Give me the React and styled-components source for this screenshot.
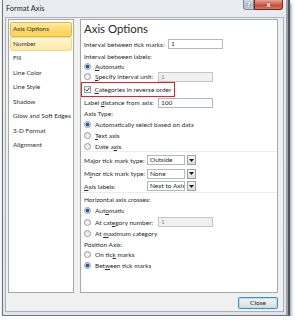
import React from "react";
import styled, { createGlobalStyle } from "styled-components";

const GlobalStyle = createGlobalStyle`
  *, *::before, *::after {
    box-sizing: border-box;
  }
  html, body {
    margin: 0;
    padding: 0;
    background: #ffffff;
  }
  body {
    font-family: Lato, "Liberation Sans", sans-serif;
    color: #2a2a2a;
  }
`;

const Window = styled.div`
  width: 288px;
  height: 316px;
  margin-left: 2px;
  border: 1px solid #6f757d;
  border-right: 2px solid #4f555c;
  border-top: none;
  background: linear-gradient(180deg, #e9edf2 0%, #dfe4ea 100%);
  box-shadow: 1px 3px 3px rgba(0, 0, 0, 0.45), inset -2px 0 0 #9aa2ab;
  display: flex;
  flex-direction: column;
`;

const TitleBar = styled.div`
  height: 17px;
  display: flex;
  align-items: flex-start;
  justify-content: space-between;
  padding: 0 5px 0 3px;
`;

const TitleText = styled.div`
  font-size: 7.4px;
  line-height: 17px;
  color: #1f1f1f;
`;

const Caption = styled.div`
  display: flex;
`;

const CaptionButton = styled.div`
  width: ${(p) => p.$w}px;
  height: 10px;
  display: flex;
  align-items: center;
  justify-content: center;
  font-family: "DejaVu Sans", sans-serif;
  font-weight: bold;
  font-size: 7px;
  color: #ffffff;
  border: 1px solid ${(p) => (p.$red ? "#7a2a20" : "#7d8690")};
  border-top: none;
  border-radius: 0 0 ${(p) => (p.$red ? "3px 0" : "0 3px")};
  background: ${(p) =>
    p.$red
      ? "linear-gradient(180deg, #e6a597 0%, #c9503b 60%, #d7765e 100%)"
      : "linear-gradient(180deg, #d7dde4 0%, #b6bfc9 60%, #c7ced6 100%)"};
  text-shadow: 0 0 2px rgba(0, 0, 0, 0.6);
`;

const Body = styled.div`
  flex: 1;
  margin: 0 4px 3px 2px;
  background: #f0f0f0;
  border: 1px solid #a9b1ba;
  display: flex;
  flex-direction: column;
  padding: 1px 5px 0 2px;
`;

const Main = styled.div`
  display: flex;
  gap: 6px;
  height: 274px;
`;

const NavList = styled.div`
  width: 66px;
  background: #ffffff;
  border: 1px solid #a8a8a8;
  padding: 2px 1px 0 1px;
`;

const NavItem = styled.div`
  height: 14.5px;
  font-size: 6.4px;
  line-height: 12.5px;
  padding-left: 2px;
  white-space: nowrap;
  color: #303030;
  border: 1px solid
    ${(p) =>
      p.$state === "selected"
        ? "#e3b94c"
        : p.$state === "hover"
        ? "#f1d98a"
        : "transparent"};
  border-radius: 2px;
  background: ${(p) =>
    p.$state === "selected"
      ? "linear-gradient(180deg, #fdeaa8 0%, #fcd96a 55%, #fbd25a 100%)"
      : p.$state === "hover"
      ? "linear-gradient(180deg, #fff6d6 0%, #fde9a4 100%)"
      : "transparent"};
`;

const Panel = styled.div`
  flex: 1;
  background: #ffffff;
  border: 1px solid #a8a8a8;
  padding: 0 0 0 2px;
  display: flex;
  flex-direction: column;
`;

const Heading = styled.div`
  height: 17px;
  font-size: 11.4px;
  line-height: 18px;
  color: #2b2b2b;
  padding-left: 1px;
`;

const Row = styled.div`
  height: ${(p) => p.$h}px;
  display: flex;
  align-items: center;
  font-size: 6.5px;
  white-space: nowrap;
  padding-left: 1px;
  color: #2a2a2a;
`;

const Label = styled.span`
  width: ${(p) => (p.$w ? `${p.$w}px` : "auto")};
  flex-shrink: 0;
`;

const U = styled.span`
  text-decoration: underline;
  text-underline-offset: 1px;
  text-decoration-thickness: 0.5px;
`;

const Flagged = styled.div`
  height: 15px;
  width: 94px;
  margin-left: -2px;
  border: 1.5px solid #d8272e;
  display: flex;
  align-items: center;
  padding-left: 1.5px;
  font-size: 6.5px;
  white-space: nowrap;
`;

const Radio = styled.span`
  width: 7px;
  height: 7px;
  border-radius: 50%;
  border: 1px solid #8f9aa5;
  background: ${(p) =>
    p.$on
      ? "radial-gradient(circle, #1d5aa8 0 1.5px, #dfe8f2 2.2px)"
      : "linear-gradient(180deg, #e4e4e4, #fafafa)"};
  margin-right: 4px;
  flex-shrink: 0;
`;

const Check = styled.span`
  width: 7px;
  height: 7px;
  border: 1px solid #8f9aa5;
  background: linear-gradient(180deg, #f0f0f0, #ffffff);
  margin-right: 4px;
  flex-shrink: 0;
  display: flex;
  align-items: center;
  justify-content: center;
`;

const Field = styled.div`
  width: ${(p) => p.$w}px;
  height: 10px;
  border: 1px solid ${(p) => (p.$disabled ? "#c4c4c4" : "#b3b8be")};
  background: ${(p) => (p.$disabled ? "#f0f0f0" : "#ffffff")};
  color: ${(p) => (p.$disabled ? "#8a8a8a" : "#2a2a2a")};
  font-size: 6.5px;
  line-height: 8px;
  padding-left: 2px;
`;

const Select = styled.div`
  display: flex;
  gap: 2px;
  height: 10px;
`;

const SelectBox = styled.div`
  width: 38px;
  border: 1px solid #b3b8be;
  background: #ffffff;
  font-size: 6.5px;
  line-height: 8px;
  padding-left: 2px;
  white-space: nowrap;
  overflow: hidden;
`;

const SelectButton = styled.div`
  width: 9px;
  border: 1px solid #9aa1a8;
  background: linear-gradient(180deg, #f6f6f6, #dcdcdc);
  display: flex;
  align-items: center;
  justify-content: center;
`;

const Sep = styled.div`
  height: 1px;
  margin: 0 0 1px -2px;
  background: #ececec;
`;

const Footer = styled.div`
  flex: 1;
  display: flex;
  align-items: center;
  justify-content: flex-end;
`;

const Button = styled.div`
  width: 40px;
  height: 12px;
  border: 1px solid #3c8fc4;
  border-radius: 2px;
  box-shadow: inset 0 0 0 1px #b8e1f7;
  background: linear-gradient(180deg, #f4f4f4 0%, #e9e9e9 50%, #dadada 100%);
  font-size: 6.5px;
  display: flex;
  align-items: center;
  justify-content: center;
  color: #222;
  margin-top: 1px;
`;

const navItems = [
  ["Axis Options", "selected"],
  ["Number", "hover"],
  ["Fill"],
  ["Line Color"],
  ["Line Style"],
  ["Shadow"],
  ["Glow and Soft Edges"],
  ["3-D Format"],
  ["Alignment"],
];

const Tick = () => (
  <svg width="5" height="5" viewBox="0 0 5 5">
    <path d="M0.6 2.6 L2 4 L4.5 0.8" fill="none" stroke="#23416b" strokeWidth="1" />
  </svg>
);

const Arrow = () => (
  <svg width="5" height="3" viewBox="0 0 5 3">
    <path d="M0 0 H5 L2.5 3 Z" fill="#1b1b1b" />
  </svg>
);

const RadioRow = ({ h, on, children }) => (
  <Row $h={h}>
    <Radio $on={on} />
    <span>{children}</span>
  </Row>
);

const SelectRow = ({ h, label, value }) => (
  <Row $h={h}>
    <Label $w={63}>{label}</Label>
    <Select>
      <SelectBox>{value}</SelectBox>
      <SelectButton>
        <Arrow />
      </SelectButton>
    </Select>
  </Row>
);

export default function App() {
  return (
    <>
      <GlobalStyle />
      <Window>
        <TitleBar>
          <TitleText>Format Axis</TitleText>
          <Caption>
            <CaptionButton $w={11}>?</CaptionButton>
            <CaptionButton $w={29} $red>
              x
            </CaptionButton>
          </Caption>
        </TitleBar>
        <Body>
          <Main>
            <NavList>
              {navItems.map(([name, state]) => (
                <NavItem key={name} $state={state}>
                  {name}
                </NavItem>
              ))}
            </NavList>
            <Panel>
              <Heading>Axis Options</Heading>
              <Row $h={14}>
                <Label $w={84}>Interval between tick marks:</Label>
                <Field $w={55}>1</Field>
              </Row>
              <Row $h={11}>Interval between labels:</Row>
              <RadioRow h={9} on>
                <U>A</U>utomatic
              </RadioRow>
              <Row $h={11}>
                <Radio />
                <Label $w={63}>
                  <U>S</U>pecify interval unit:
                </Label>
                <Field $w={55} $disabled>
                  1
                </Field>
              </Row>
              <Flagged>
                <Check>
                  <Tick />
                </Check>
                <span>
                  <U>C</U>ategories in reverse order
                </span>
              </Flagged>
              <Row $h={11}>
                <Label $w={74}>
                  Label <U>d</U>istance from axis:
                </Label>
                <Field $w={55}>100</Field>
              </Row>
              <Row $h={11}>Axis Type:</Row>
              <RadioRow h={11} on>
                Automatically select based on data
              </RadioRow>
              <RadioRow h={11}>
                <U>T</U>ext axis
              </RadioRow>
              <RadioRow h={10}>
                Date a<U>x</U>is
              </RadioRow>
              <Sep />
              <SelectRow h={14} label={<>Ma<U>j</U>or tick mark type:</>} value="Outside" />
              <SelectRow h={13} label={<>M<U>i</U>nor tick mark type:</>} value="None" />
              <SelectRow h={12} label={<><U>A</U>xis labels:</>} value="Next to Axis" />
              <Sep />
              <Row $h={11}>Horizontal axis crosses:</Row>
              <RadioRow h={11} on>
                Aut<U>o</U>matic
              </RadioRow>
              <Row $h={12}>
                <Radio />
                <Label $w={63}>
                  At cat<U>e</U>gory number:
                </Label>
                <Field $w={55} $disabled>
                  1
                </Field>
              </Row>
              <RadioRow h={11}>
                At <U>m</U>aximum category
              </RadioRow>
              <Row $h={10}>Position Axis:</Row>
              <RadioRow h={11}>
                On tic<U>k</U> marks
              </RadioRow>
              <RadioRow h={11} on>
                Bet<U>w</U>een tick marks
              </RadioRow>
            </Panel>
          </Main>
          <Footer>
            <Button>Close</Button>
          </Footer>
        </Body>
      </Window>
    </>
  );
}
